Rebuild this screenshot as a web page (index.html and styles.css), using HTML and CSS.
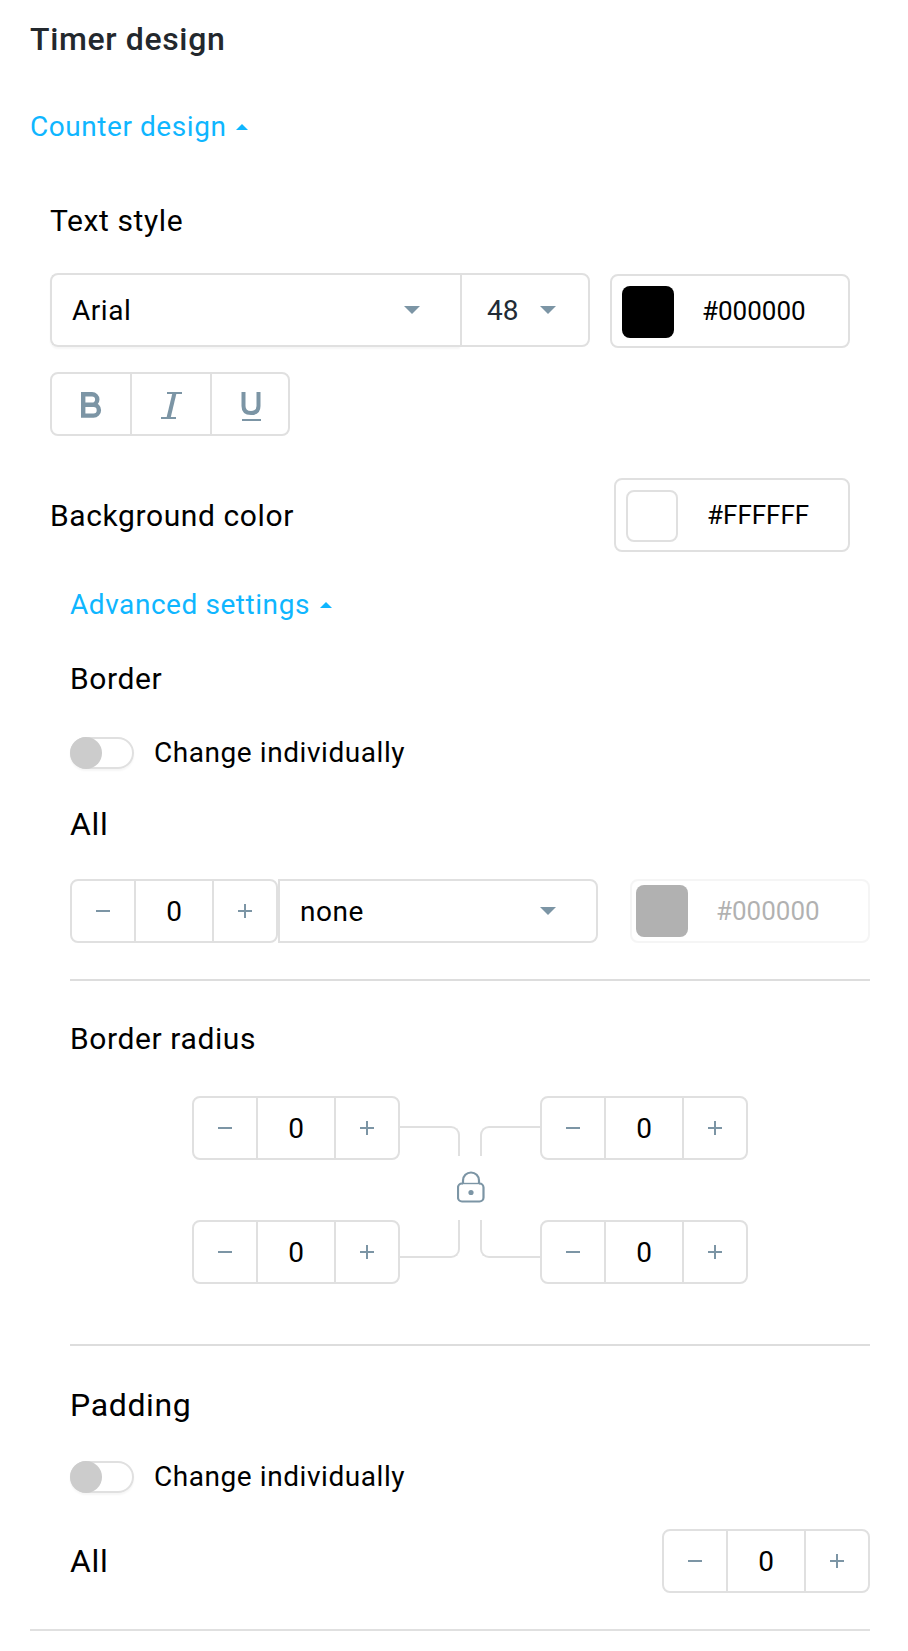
FILE: index.html
```html
<!DOCTYPE html>
<html lang="en">
<head>
  <meta charset="UTF-8" />
  <meta name="viewport" content="width=device-width, initial-scale=1.0"/>
  <title>Timer design</title>
  <link rel="stylesheet" href="styles.css">
</head>
<body>
  <div class="panel">
    <h2>Timer design</h2>
    <a class="toggle-link">Counter design <span class="arrow-up"></span></a>

    <div class="section">
      <h3 class="text-style-title">Text style</h3>
      <div class="font-row">
        <div class="select font-select"><span>Arial</span><span class="arrow-down"></span></div>
        <div class="select size-select"><span>48</span><span class="arrow-down"></span></div>
        <div class="color-box font-color"><span class="swatch black"></span><span class="hex">#000000</span></div>
      </div>

      <div class="format-buttons">
        <button type="button">
          <svg width="24" height="32" viewBox="0 0 24 32" fill="none" stroke="#7c95a5" stroke-width="4.4"><path d="M4.2 4.2H13a4.8 4.8 0 0 1 0 10.6H4.2M13 14.8h1.5a5 5 0 0 1 0 10.8H4.2V2"/></svg>
        </button>
        <button type="button">
          <svg width="24" height="32" viewBox="0 0 24 32" fill="none" stroke="#7c95a5"><path stroke-width="2" d="M8 3h15M2 28h15"/><path stroke-width="4" d="M15.5 3L9.5 28"/></svg>
        </button>
        <button type="button">
          <svg width="24" height="32" viewBox="0 0 24 32" fill="none" stroke="#7c95a5"><path stroke-width="4" d="M5.5 2v14q0 7 7.5 7t7.5-7V2"/><path stroke-width="2" d="M4 30h19"/></svg>
        </button>
      </div>

      <div class="background-row">
        <h3>Background color</h3>
        <div class="color-box background-color"><span class="swatch white"></span><span class="hex">#FFFFFF</span></div>
      </div>

      <div class="advanced">
        <a class="toggle-link">Advanced settings <span class="arrow-up"></span></a>

        <h3 class="border-title">Border</h3>
        <div class="switch-row"><span class="switch"></span><span class="switch-label">Change individually</span></div>
        <h4 class="all-title">All</h4>
        <div class="border-row">
          <div class="stepper"><button type="button" class="minus"></button><span class="value">0</span><button type="button" class="plus"></button></div>
          <div class="select border-select"><span>none</span><span class="arrow-down"></span></div>
          <div class="color-box disabled"><span class="swatch black"></span><span class="hex">#000000</span></div>
        </div>
        <hr>

        <h3 class="radius-title">Border radius</h3>
        <div class="radius-grid">
          <div class="stepper"><button type="button" class="minus"></button><span class="value">0</span><button type="button" class="plus"></button></div>
          <div class="link">
            <span class="corner top-left"></span>
            <span class="corner top-right"></span>
            <svg class="lock" width="28" height="32" viewBox="0 0 28 32" fill="none" stroke="#7c95a5" stroke-width="2.2"><path d="M6 12.5V9.5a8 8 0 0 1 16 0v3"/><path stroke-width="1.4" d="M5 12.5h18"/><path d="M6 12.5H5a4 4 0 0 0-4 4v10a4 4 0 0 0 4 4h17.5a4 4 0 0 0 4-4v-10a4 4 0 0 0-4-4H22"/><circle cx="14" cy="21.5" r="2.6" fill="#7c95a5" stroke="none"/></svg>
            <span class="corner bottom-left"></span>
            <span class="corner bottom-right"></span>
          </div>
          <div class="stepper"><button type="button" class="minus"></button><span class="value">0</span><button type="button" class="plus"></button></div>
          <div class="stepper"><button type="button" class="minus"></button><span class="value">0</span><button type="button" class="plus"></button></div>
          <div class="stepper"><button type="button" class="minus"></button><span class="value">0</span><button type="button" class="plus"></button></div>
        </div>
        <hr>

        <h4 class="padding-title">Padding</h4>
        <div class="switch-row"><span class="switch"></span><span class="switch-label">Change individually</span></div>
        <div class="padding-row">
          <h4>All</h4>
          <div class="stepper"><button type="button" class="minus"></button><span class="value">0</span><button type="button" class="plus"></button></div>
        </div>
      </div>
    </div>
    <hr class="last">
  </div>
</body>
</html>
```

FILE: styles.css
```css
* {
  box-sizing: border-box;
}

body {
  margin: 0;
  background: #fff;
  color: #000;
  font-family: Roboto, sans-serif;
  font-size: 28px;
}

.panel {
  width: 840px;
  margin-left: 30px;
  padding-top: 19px;
}

h2, h3, h4 {
  margin: 0;
  letter-spacing: 0.02em;
}

h2 {
  font-size: 32px;
  font-weight: 500;
  line-height: 40px;
  color: #23282d;
  margin-bottom: 51px;
}

h3 {
  font-size: 30px;
  font-weight: 400;
  line-height: 36px;
}

h4 {
  font-size: 32px;
  font-weight: 400;
  line-height: 40px;
}

.toggle-link {
  display: flex;
  align-items: center;
  gap: 10px;
  height: 32px;
  padding-top: 2px;
  line-height: 32px;
  letter-spacing: 0.02em;
  color: #0fb6ff;
}

.arrow-up {
  border-left: 6px solid transparent;
  border-right: 6px solid transparent;
  border-bottom: 6px solid #0fb6ff;
}

.arrow-down {
  border-left: 8px solid transparent;
  border-right: 8px solid transparent;
  border-top: 8px solid #7c95a5;
}

.section {
  padding: 61px 20px 0;
}

.font-row {
  display: flex;
  margin-top: 34px;
}

.select {
  display: flex;
  align-items: center;
  justify-content: space-between;
  height: 74px;
  border: 2px solid #e0e0e0;
  letter-spacing: 0.02em;
}

.font-select {
  width: 410px;
  padding: 0 40px 0 20px;
  border-right: none;
  border-radius: 8px 0 0 8px;
  box-shadow: 0 2px 2px rgba(0, 0, 0, 0.04);
}

.size-select {
  width: 130px;
  padding: 0 32px 0 25px;
  border-radius: 0 8px 8px 0;
  letter-spacing: 0;
  color: #212b36;
}

.color-box {
  display: flex;
  align-items: center;
  width: 240px;
  height: 74px;
  padding-left: 10px;
  border: 2px solid #e0e0e0;
  border-radius: 8px;
  font-size: 26px;
}

.font-color {
  margin: 1px 0 0 20px;
}

.swatch {
  width: 52px;
  height: 52px;
  margin-top: 2px;
  border-radius: 8px;
}

.black {
  background: #000;
}

.white {
  border: 2px solid #e0e0e0;
}

.hex {
  margin-left: 28px;
}

.format-buttons {
  display: flex;
  width: 240px;
  height: 64px;
  margin-top: 24px;
  border: 2px solid #e0e0e0;
  border-radius: 8px;
}

.format-buttons button {
  display: flex;
  align-items: center;
  justify-content: center;
  width: 80px;
  padding: 3px 0 0;
  border: none;
  border-right: 2px solid #e0e0e0;
  background: none;
}

.format-buttons button:last-child {
  width: 76px;
  border-right: none;
}

.background-row {
  display: flex;
  align-items: center;
  justify-content: space-between;
  margin-top: 42px;
}

.background-row h3 {
  padding-top: 2px;
}

.background-color {
  width: 236px;
}

.background-color .hex {
  margin-left: 29px;
}

.advanced {
  width: 800px;
  margin-left: 20px;
  padding-top: 36px;
}

.border-title {
  margin: 41px 0 40px;
}

.switch-row {
  display: flex;
  align-items: center;
  gap: 20px;
  height: 32px;
  letter-spacing: 0.02em;
}

.switch-label {
  padding-bottom: 2px;
}

.switch {
  width: 64px;
  height: 32px;
  border: 2px solid #e0e0e0;
  border-radius: 16px;
  box-shadow: 0 2px 2px rgba(0, 0, 0, 0.04);
}

.switch::before {
  content: "";
  display: block;
  width: 32px;
  height: 32px;
  margin: -2px;
  border-radius: 50%;
  background: #ccc;
}

.all-title {
  margin: 35px 0;
}

.border-row {
  display: flex;
}

.stepper {
  display: flex;
  width: 208px;
  height: 64px;
  border: 2px solid #e0e0e0;
  border-radius: 8px;
}

.stepper button {
  flex: 1;
  padding: 0;
  border: none;
  background: linear-gradient(#7c95a5, #7c95a5) center / 14px 2px no-repeat;
}

.stepper .plus {
  background: linear-gradient(#7c95a5, #7c95a5) center / 14px 2px no-repeat, linear-gradient(#7c95a5, #7c95a5) center / 2px 14px no-repeat;
}

.value {
  width: 80px;
  line-height: 62px;
  height: 60px;
  text-align: center;
  border-left: 2px solid #e0e0e0;
  border-right: 2px solid #e0e0e0;
}

.border-select {
  width: 320px;
  height: 64px;
  padding: 0 40px 0 20px;
  border-radius: 0 8px 8px 0;
}

.disabled {
  height: 64px;
  margin-left: 32px;
  padding-left: 4px;
  opacity: 0.3;
}

.disabled .swatch {
  margin-top: 0;
}

hr {
  height: 2px;
  margin: 36px 0 0;
  border: none;
  background: #ddd;
}

.radius-title {
  margin: 40px 0 39px;
}

.radius-grid {
  display: grid;
  grid-template-columns: 208px 140px 208px;
  row-gap: 60px;
  margin: 0 0 60px 122px;
}

.link {
  grid-column: 2;
  grid-row: 1 / 3;
  display: grid;
  grid-template-columns: 60px 60px;
  grid-template-rows: 30px 64px 38px;
  column-gap: 20px;
  padding-top: 30px;
}

.lock {
  grid-column: 1 / 3;
  justify-self: center;
  align-self: center;
  margin: 0 0 2px 2px;
}

.top-left {
  border-top: 2px solid #e0e0e0;
  border-right: 2px solid #e0e0e0;
  border-top-right-radius: 9px;
}

.top-right {
  border-top: 2px solid #e0e0e0;
  border-left: 2px solid #e0e0e0;
  border-top-left-radius: 9px;
}

.bottom-left {
  border-bottom: 2px solid #e0e0e0;
  border-right: 2px solid #e0e0e0;
  border-bottom-right-radius: 9px;
}

.bottom-right {
  border-bottom: 2px solid #e0e0e0;
  border-left: 2px solid #e0e0e0;
  border-bottom-left-radius: 9px;
}

.padding-title {
  margin: 39px 0 36px;
}

.padding-row {
  display: flex;
  align-items: center;
  justify-content: space-between;
  margin-top: 36px;
}

.last {
  background: #e0e0e0;
}
```
